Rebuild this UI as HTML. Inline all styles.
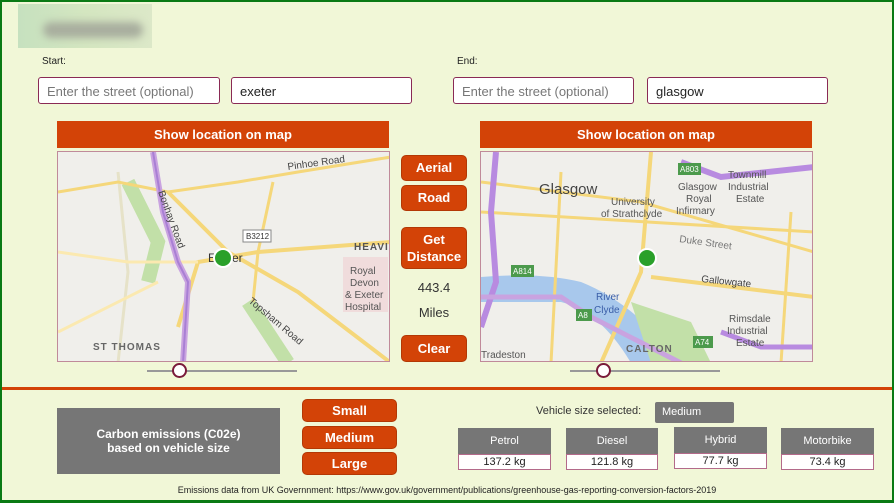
<!DOCTYPE html>
<html><head><meta charset="utf-8">
<style>
*{box-sizing:border-box;margin:0;padding:0}
body{width:894px;height:503px;overflow:hidden;background:#f1f7d7;font-family:"Liberation Sans",sans-serif;position:relative}
#f{position:absolute;left:0;top:0;width:894px;height:503px;border:2px solid #0a7a14;border-bottom-width:3px;pointer-events:none}
.a{position:absolute}
.lbl{font-size:10px;color:#222}
.inp{position:absolute;height:27px;background:#fff;border:1px solid #8a2a55;border-radius:3px;font-size:13px;padding:6px 8px;color:#222;white-space:nowrap;overflow:hidden}
.ph{color:#777}
.bar{position:absolute;height:27px;background:#d34307;color:#fff;font-weight:bold;font-size:13px;text-align:center;line-height:27px}
.btn{position:absolute;background:#d34307;color:#fff;font-weight:bold;font-size:13px;text-align:center;border-radius:5px;border:1px solid #b33805}
.map{position:absolute;width:333px;height:211px;border:1px solid #c08a9a;background:#f0efeb;overflow:hidden}
.map svg{position:absolute;left:0;top:0}
.sl{position:absolute;height:2px;background:#999}
.kn{position:absolute;width:15px;height:15px;border:2px solid #7a1a3a;border-radius:50%;background:#fff}
.gbox{position:absolute;background:#767676;color:#fff;font-weight:bold;font-size:12px;text-align:center}
.hd{position:absolute;background:#767676;color:#fff;font-size:11px;text-align:center;line-height:26px}
.val{position:absolute;background:#fff;border:1px solid #b36a8a;font-size:11px;text-align:center;line-height:14px;color:#222}
</style></head><body>
<div class="a" style="left:18px;top:4px;width:134px;height:44px;background:linear-gradient(90deg,#c6e1bf,#d4e6c0,#dce8c8)"><div style="position:absolute;left:25px;top:18px;width:100px;height:16px;background:#a8ae9e;border-radius:8px;filter:blur(4px)"></div></div>
<div class="a lbl" style="left:42px;top:56px">Start:</div>
<div class="a lbl" style="left:457px;top:56px">End:</div>
<div class="inp ph" style="left:38px;top:77px;width:182px">Enter the street (optional)</div>
<div class="inp" style="left:231px;top:77px;width:181px">exeter</div>
<div class="inp ph" style="left:453px;top:77px;width:181px">Enter the street (optional)</div>
<div class="inp" style="left:647px;top:77px;width:181px">glasgow</div>
<div class="bar" style="left:57px;top:121px;width:332px">Show location on map</div>
<div class="bar" style="left:480px;top:121px;width:332px">Show location on map</div>

<div class="map" style="left:57px;top:151px">
<svg width="333" height="211" font-family="Liberation Sans" font-size="10">
<path d="M70 30 L100 90 L90 130" stroke="#c2e0a8" stroke-width="14" fill="none"/>
<path d="M190 150 L230 211" stroke="#c2e0a8" stroke-width="14" fill="none"/>
<rect x="285" y="105" width="45" height="55" fill="#f0dcdc"/>
<path d="M60 20 L70 120 L60 211" stroke="#e6e2c8" stroke-width="3" fill="none"/>
<path d="M0 40 L60 30 L110 40 L180 30 L240 20 L333 5" stroke="#f5d77a" stroke-width="3" fill="none"/>
<path d="M110 40 L170 100 L240 140 L333 211" stroke="#f5d77a" stroke-width="4" fill="none"/>
<path d="M120 175 L140 110 L200 100 L333 90" stroke="#f5d77a" stroke-width="4" fill="none"/>
<path d="M215 30 L200 100 L195 150" stroke="#f5d77a" stroke-width="3" fill="none"/>
<path d="M0 100 L70 110 L140 110" stroke="#fbe9b0" stroke-width="3" fill="none"/>
<path d="M0 180 L100 130" stroke="#fbe9b0" stroke-width="3" fill="none"/>
<path d="M95 0 L105 60 L120 110 L130 130 L125 211" stroke="#c9a3e0" stroke-width="6" fill="none"/>
<path d="M95 0 L105 60 L120 110 L130 130 L125 211" stroke="#a97fd4" stroke-width="2" fill="none"/>
<text x="230" y="18" fill="#444" transform="rotate(-8 230 18)">Pinhoe Road</text>
<text x="100" y="40" fill="#444" transform="rotate(70 100 40)">Bonhay Road</text>
<text x="190" y="150" fill="#444" transform="rotate(40 190 150)">Topsham Road</text>
<rect x="185" y="78" width="28" height="12" fill="#fff" stroke="#888"/><text x="188" y="87" font-size="8" fill="#333">B3212</text>
<text x="150" y="110" font-size="12" fill="#333">Exeter</text>
<text x="296" y="98" fill="#555" font-weight="bold" letter-spacing="1">HEAVI</text>
<text x="292" y="122" fill="#555">Royal</text>
<text x="292" y="134" fill="#555">Devon</text>
<text x="287" y="146" fill="#555">&amp; Exeter</text>
<text x="287" y="158" fill="#555">Hospital</text>
<text x="35" y="198" fill="#666" font-weight="bold" letter-spacing="1">ST THOMAS</text>
<circle cx="165" cy="106" r="9" fill="#2aa02a" stroke="#fff" stroke-width="2"/>
</svg></div>

<div class="map" style="left:480px;top:151px">
<svg width="333" height="211" font-family="Liberation Sans" font-size="10">
<path d="M0 125 Q60 120 100 130 Q150 150 190 200 L200 211 L150 211 Q120 160 80 150 L0 150Z" fill="#a8c8ec"/>
<path d="M150 150 L210 170 L230 211 L170 211Z" fill="#c2e0a8"/>
<path d="M0 60 L333 80" stroke="#f5d77a" stroke-width="3" fill="none"/>
<path d="M0 30 L160 50 L333 100" stroke="#f5d77a" stroke-width="3" fill="none"/>
<path d="M170 0 L160 120 L120 211" stroke="#f5d77a" stroke-width="4" fill="none"/>
<path d="M80 20 L70 211" stroke="#f5d77a" stroke-width="3" fill="none"/>
<path d="M170 125 L333 145" stroke="#f5d77a" stroke-width="4" fill="none"/>
<path d="M310 60 L300 211" stroke="#f5d77a" stroke-width="3" fill="none"/>
<path d="M15 0 L10 60 L15 130 L0 175" stroke="#b88be0" stroke-width="6" fill="none"/>
<path d="M200 10 L240 25 L333 15" stroke="#b88be0" stroke-width="6" fill="none"/>
<path d="M0 145 L80 145 L110 165 L200 211" stroke="#c9a3e0" stroke-width="5" fill="none"/>
<path d="M240 180 L280 195 L333 195" stroke="#b88be0" stroke-width="5" fill="none"/>
<text x="58" y="42" font-size="15" fill="#444">Glasgow</text>
<text x="130" y="53" fill="#555">University</text>
<text x="120" y="65" fill="#555">of Strathclyde</text>
<text x="197" y="38" fill="#555">Glasgow</text>
<text x="205" y="50" fill="#555">Royal</text>
<text x="195" y="62" fill="#555">Infirmary</text>
<text x="247" y="26" fill="#555">Townmill</text>
<text x="247" y="38" fill="#555">Industrial</text>
<text x="255" y="50" fill="#555">Estate</text>
<text x="198" y="90" fill="#777" transform="rotate(8 198 90)">Duke Street</text>
<text x="220" y="130" fill="#444" transform="rotate(6 220 130)">Gallowgate</text>
<text x="115" y="148" fill="#3a5ea8">River</text>
<text x="113" y="161" fill="#3a5ea8">Clyde</text>
<text x="248" y="170" fill="#555">Rimsdale</text>
<text x="246" y="182" fill="#555">Industrial</text>
<text x="255" y="194" fill="#555">Estate</text>
<text x="145" y="200" fill="#666" font-weight="bold" letter-spacing="1">CALTON</text>
<text x="0" y="206" fill="#555">Tradeston</text>
<rect x="30" y="113" width="23" height="12" fill="#4c9a4c"/><text x="32" y="122" font-size="8" fill="#fff">A814</text>
<rect x="197" y="11" width="23" height="12" fill="#4c9a4c"/><text x="199" y="20" font-size="8" fill="#fff">A803</text>
<rect x="95" y="157" width="16" height="12" fill="#4c9a4c"/><text x="97" y="166" font-size="8" fill="#fff">A8</text>
<rect x="212" y="184" width="20" height="12" fill="#4c9a4c"/><text x="214" y="193" font-size="8" fill="#fff">A74</text>
<circle cx="166" cy="106" r="9" fill="#2aa02a" stroke="#fff" stroke-width="2"/>
</svg></div>

<div class="btn" style="left:401px;top:155px;width:66px;height:26px;line-height:24px">Aerial</div>
<div class="btn" style="left:401px;top:185px;width:66px;height:26px;line-height:24px">Road</div>
<div class="btn" style="left:401px;top:227px;width:66px;height:42px;line-height:17px;padding-top:3px">Get<br>Distance</div>
<div class="a" style="left:401px;top:280px;width:66px;text-align:center;font-size:13px;color:#333">443.4</div>
<div class="a" style="left:401px;top:305px;width:66px;text-align:center;font-size:13px;color:#333">Miles</div>
<div class="btn" style="left:401px;top:335px;width:66px;height:27px;line-height:25px">Clear</div>

<div class="sl" style="left:147px;top:370px;width:150px"></div>
<div class="kn" style="left:172px;top:363px"></div>
<div class="sl" style="left:570px;top:370px;width:150px"></div>
<div class="kn" style="left:596px;top:363px"></div>

<div class="a" style="left:2px;top:387px;width:890px;height:3px;background:#d34307"></div>

<div class="gbox" style="left:57px;top:408px;width:223px;height:66px;padding-top:19px;line-height:14px">Carbon emissions (C02e)<br>based on vehicle size</div>
<div class="btn" style="left:302px;top:399px;width:95px;height:23px;line-height:21px">Small</div>
<div class="btn" style="left:302px;top:426px;width:95px;height:23px;line-height:21px">Medium</div>
<div class="btn" style="left:302px;top:452px;width:95px;height:23px;line-height:21px">Large</div>

<div class="a" style="left:536px;top:405px;font-size:11px;color:#333">Vehicle size selected:</div>
<div class="a" style="left:655px;top:402px;width:79px;height:21px;background:#767676;border-radius:2px;color:#fff;font-size:11px;line-height:21px;padding-left:7px">Medium</div>

<div class="hd" style="left:458px;top:428px;width:93px">Petrol</div>
<div class="val" style="left:458px;top:454px;width:93px;height:16px">137.2 kg</div>
<div class="hd" style="left:566px;top:428px;width:92px">Diesel</div>
<div class="val" style="left:566px;top:454px;width:92px;height:16px">121.8 kg</div>
<div class="hd" style="left:674px;top:427px;width:93px">Hybrid</div>
<div class="val" style="left:674px;top:453px;width:93px;height:16px">77.7 kg</div>
<div class="hd" style="left:781px;top:428px;width:93px">Motorbike</div>
<div class="val" style="left:781px;top:454px;width:93px;height:16px">73.4 kg</div>

<div class="a" style="left:0;top:485px;width:894px;text-align:center;font-size:9px;color:#222">Emissions data from UK Governnment: https://www.gov.uk/government/publications/greenhouse-gas-reporting-conversion-factors-2019</div>
<div id="f"></div>
</body></html>
